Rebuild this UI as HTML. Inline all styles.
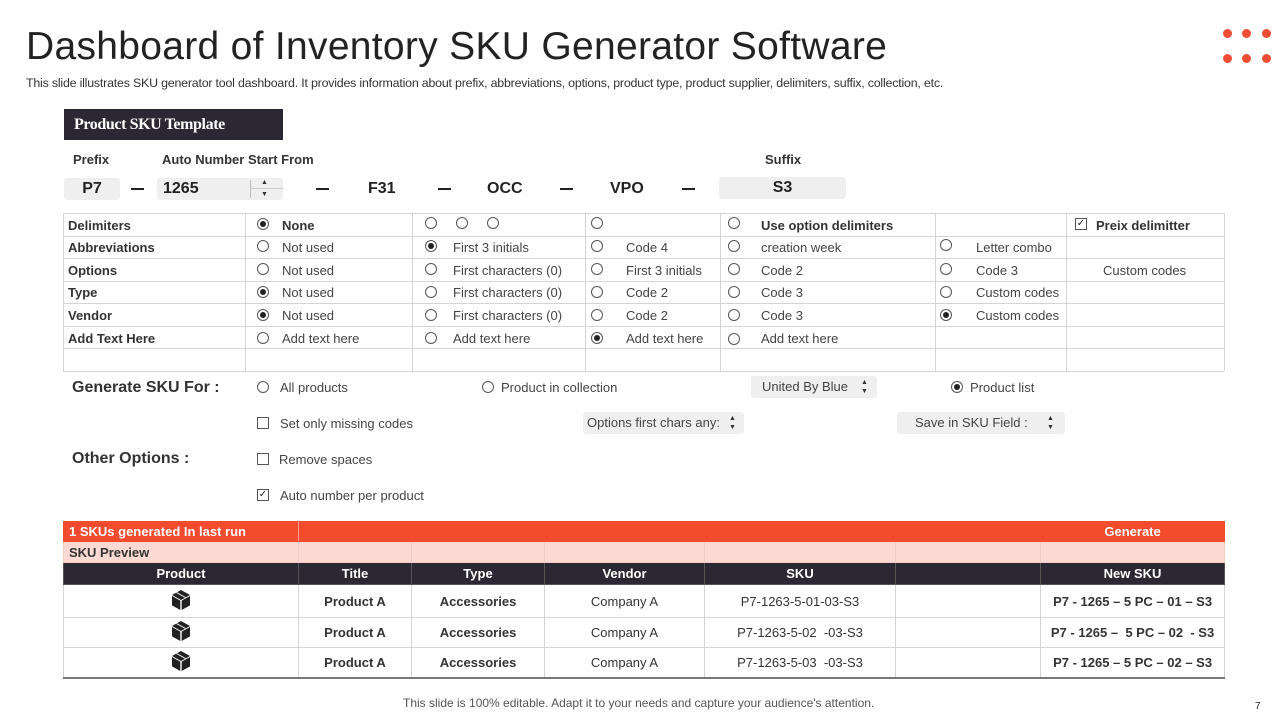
<!DOCTYPE html>
<html><head><meta charset="utf-8"><style>
*{margin:0;padding:0;box-sizing:border-box}
body{width:1280px;height:720px;background:#fff;position:relative;overflow:hidden;font-family:"Liberation Sans",Arial,sans-serif;color:#333}
.a{position:absolute;white-space:nowrap}
.t{font-size:13px;color:#444;line-height:16px}
.b{font-weight:bold;color:#333}
.r{position:absolute;width:12px;height:12px;border:1px solid #555;border-radius:50%;background:#fff}
.r.on::after{content:"";position:absolute;left:2px;top:2px;width:6px;height:6px;border-radius:50%;background:#222}
.c{position:absolute;width:12px;height:12px;border:1px solid #555;background:#fff;font-size:10px;line-height:10px;text-align:center;color:#222}
.hl{position:absolute;height:1px;background:#d4d4d4}
.vl{position:absolute;width:1px;background:#d4d4d4}
.box{position:absolute;background:#efefef;border-radius:3px;font-size:16px;font-weight:bold;color:#222;line-height:22px}
.dash{position:absolute;width:13px;height:2px;background:#222}
.dot{position:absolute;width:9px;height:9px;border-radius:50%;background:#f04e33}
.sel{position:absolute;background:#efefef;border-radius:3px;font-size:13px;color:#444;line-height:22px;height:22px}
.arr{position:absolute;font-size:7px;line-height:7px;color:#333}
table{border-collapse:collapse;position:absolute;left:63px;top:521px;width:1161px;table-layout:fixed}
td{border:1px solid #d4d4d4;font-size:13px;text-align:center;color:#333;font-weight:bold;padding:0}
</style></head><body>
<div class="a" style="left:26px;top:25px;font-size:39px;color:#222;letter-spacing:0.3px">Dashboard of Inventory SKU Generator Software</div>
<div class="a" style="left:26px;top:76px;font-size:12.4px;color:#333;letter-spacing:-0.2px">This slide illustrates SKU generator tool dashboard. It provides information about prefix, abbreviations, options, product type, product supplier, delimiters, suffix, collection, etc.</div>
<div class="dot" style="left:1223px;top:29px"></div><div class="dot" style="left:1242px;top:29px"></div><div class="dot" style="left:1262px;top:29px"></div>
<div class="dot" style="left:1223px;top:54px"></div><div class="dot" style="left:1242px;top:54px"></div><div class="dot" style="left:1262px;top:54px"></div>

<div class="a" style="left:64px;top:109px;width:219px;height:31px;background:#2b2833;color:#fff;font-family:'Liberation Serif',serif;font-weight:bold;font-size:16px;line-height:31px;padding-left:10px;letter-spacing:-0.4px">Product SKU Template</div>

<div class="a b" style="left:73px;top:152px;font-size:13px">Prefix</div>
<div class="a b" style="left:162px;top:152px;font-size:13px">Auto Number Start From</div>
<div class="a b" style="left:765px;top:152px;font-size:13px">Suffix</div>

<div class="box" style="left:64px;top:178px;width:56px;text-align:center">P7</div>
<div class="dash" style="left:131px;top:188px"></div>
<div class="box" style="left:157px;top:178px;width:126px;padding-left:6px">1265</div>
<div class="a" style="left:250px;top:180px;width:1px;height:18px;background:#bbb"></div>
<div class="a" style="left:250px;top:188px;width:33px;height:1px;background:#ccc"></div>
<div class="arr" style="left:261px;top:179px">▲</div><div class="arr" style="left:261px;top:191px">▼</div>
<div class="dash" style="left:316px;top:188px"></div>
<div class="a b" style="left:368px;top:180px;font-size:16px;color:#222">F31</div>
<div class="dash" style="left:438px;top:188px"></div>
<div class="a b" style="left:487px;top:180px;font-size:16px;color:#222">OCC</div>
<div class="dash" style="left:560px;top:188px"></div>
<div class="a b" style="left:610px;top:180px;font-size:16px;color:#222">VPO</div>
<div class="dash" style="left:682px;top:188px"></div>
<div class="box" style="left:719px;top:177px;width:127px;text-align:center">S3</div>

<div class="hl" style="left:63px;top:213px;width:1161px"></div>
<div class="hl" style="left:63px;top:236px;width:1161px"></div>
<div class="hl" style="left:63px;top:258px;width:1161px"></div>
<div class="hl" style="left:63px;top:281px;width:1161px"></div>
<div class="hl" style="left:63px;top:303px;width:1161px"></div>
<div class="hl" style="left:63px;top:326px;width:1161px"></div>
<div class="hl" style="left:63px;top:348px;width:1161px"></div>
<div class="hl" style="left:63px;top:371px;width:1161px"></div>
<div class="vl" style="left:63px;top:213px;height:158px"></div>
<div class="vl" style="left:245px;top:213px;height:158px"></div>
<div class="vl" style="left:412px;top:213px;height:158px"></div>
<div class="vl" style="left:585px;top:213px;height:158px"></div>
<div class="vl" style="left:720px;top:213px;height:158px"></div>
<div class="vl" style="left:935px;top:213px;height:158px"></div>
<div class="vl" style="left:1066px;top:213px;height:158px"></div>
<div class="vl" style="left:1224px;top:213px;height:158px"></div>

<div class="a t b" style="left:68px;top:218px">Delimiters</div>
<div class="a t b" style="left:68px;top:240px">Abbreviations</div>
<div class="a t b" style="left:68px;top:263px">Options</div>
<div class="a t b" style="left:68px;top:285px">Type</div>
<div class="a t b" style="left:68px;top:308px">Vendor</div>
<div class="a t b" style="left:68px;top:331px">Add Text Here</div>

<div class="r on" style="left:257px;top:218px"></div><div class="a t b" style="left:282px;top:218px">None</div>
<div class="r" style="left:425px;top:217px"></div><div class="r" style="left:456px;top:217px"></div><div class="r" style="left:487px;top:217px"></div>
<div class="r" style="left:591px;top:217px"></div>
<div class="r" style="left:728px;top:217px"></div><div class="a t b" style="left:761px;top:218px">Use option delimiters</div>
<div class="c" style="left:1075px;top:218px">✓</div><div class="a t b" style="left:1096px;top:218px">Preix delimitter</div>
<div class="r" style="left:257px;top:240px"></div><div class="a t" style="left:282px;top:240px">Not used</div>
<div class="r on" style="left:425px;top:240px"></div><div class="a t" style="left:453px;top:240px">First 3 initials</div>
<div class="r" style="left:591px;top:240px"></div><div class="a t" style="left:626px;top:240px">Code 4</div>
<div class="r" style="left:728px;top:240px"></div><div class="a t" style="left:761px;top:240px">creation week</div>
<div class="r" style="left:940px;top:239px"></div><div class="a t" style="left:976px;top:240px">Letter combo</div>
<div class="r" style="left:257px;top:263px"></div><div class="a t" style="left:282px;top:263px">Not used</div>
<div class="r" style="left:425px;top:263px"></div><div class="a t" style="left:453px;top:263px">First characters (0)</div>
<div class="r" style="left:591px;top:263px"></div><div class="a t" style="left:626px;top:263px">First 3 initials</div>
<div class="r" style="left:728px;top:263px"></div><div class="a t" style="left:761px;top:263px">Code 2</div>
<div class="r" style="left:940px;top:263px"></div><div class="a t" style="left:976px;top:263px">Code 3</div>
<div class="a t" style="left:1103px;top:263px">Custom codes</div>
<div class="r on" style="left:257px;top:286px"></div><div class="a t" style="left:282px;top:285px">Not used</div>
<div class="r" style="left:425px;top:286px"></div><div class="a t" style="left:453px;top:285px">First characters (0)</div>
<div class="r" style="left:591px;top:286px"></div><div class="a t" style="left:626px;top:285px">Code 2</div>
<div class="r" style="left:728px;top:286px"></div><div class="a t" style="left:761px;top:285px">Code 3</div>
<div class="r" style="left:940px;top:286px"></div><div class="a t" style="left:976px;top:285px">Custom codes</div>
<div class="r on" style="left:257px;top:309px"></div><div class="a t" style="left:282px;top:308px">Not used</div>
<div class="r" style="left:425px;top:309px"></div><div class="a t" style="left:453px;top:308px">First characters (0)</div>
<div class="r" style="left:591px;top:309px"></div><div class="a t" style="left:626px;top:308px">Code 2</div>
<div class="r" style="left:728px;top:309px"></div><div class="a t" style="left:761px;top:308px">Code 3</div>
<div class="r on" style="left:940px;top:309px"></div><div class="a t" style="left:976px;top:308px">Custom codes</div>
<div class="r" style="left:257px;top:332px"></div><div class="a t" style="left:282px;top:331px">Add text here</div>
<div class="r" style="left:425px;top:332px"></div><div class="a t" style="left:453px;top:331px">Add text here</div>
<div class="r on" style="left:591px;top:332px"></div><div class="a t" style="left:626px;top:331px">Add text here</div>
<div class="r" style="left:728px;top:333px"></div><div class="a t" style="left:761px;top:331px">Add text here</div>

<div class="a b" style="left:72px;top:379px;font-size:16px">Generate SKU For :</div>
<div class="a b" style="left:72px;top:450px;font-size:16px">Other Options :</div>
<div class="r" style="left:257px;top:381px"></div><div class="a t" style="left:280px;top:380px">All products</div>
<div class="r" style="left:482px;top:381px"></div><div class="a t" style="left:501px;top:380px">Product in collection</div>
<div class="sel" style="left:751px;top:376px;width:126px;padding-left:11px">United By Blue</div>
<div class="arr" style="left:861px;top:379px">▲</div><div class="arr" style="left:861px;top:388px">▼</div>
<div class="r on" style="left:951px;top:381px"></div><div class="a t" style="left:970px;top:380px">Product list</div>
<div class="c" style="left:257px;top:417px"></div><div class="a t" style="left:280px;top:416px">Set only missing codes</div>
<div class="sel" style="left:583px;top:412px;width:161px;padding-left:4px">Options first chars any:</div>
<div class="arr" style="left:729px;top:415px">▲</div><div class="arr" style="left:729px;top:424px">▼</div>
<div class="sel" style="left:897px;top:412px;width:168px;padding-left:18px">Save in SKU Field :</div>
<div class="arr" style="left:1047px;top:415px">▲</div><div class="arr" style="left:1047px;top:424px">▼</div>
<div class="c" style="left:257px;top:453px"></div><div class="a t" style="left:279px;top:452px">Remove spaces</div>
<div class="c" style="left:257px;top:489px">✓</div><div class="a t" style="left:280px;top:488px">Auto number per product</div>

<table>
<colgroup><col style="width:235px"><col style="width:113px"><col style="width:133px"><col style="width:160px"><col style="width:191px"><col style="width:145px"><col style="width:184px"></colgroup>
<tr style="height:20px;background:#f34b2e"><td style="text-align:left;color:#fff;padding-left:5px;border-color:#f34b2e;border-right:1px solid #f8a090">1 SKUs generated In last run</td><td colspan="5" style="border-color:#f34b2e"></td><td style="color:#fff;border-color:#f34b2e;border-left:1px solid #f8a090">Generate</td></tr>
<tr style="height:21px;background:#fcd9d2"><td style="text-align:left;padding-left:5px;border-color:#f5ccc4">SKU Preview</td><td style="border-color:#f5ccc4"></td><td style="border-color:#f5ccc4"></td><td style="border-color:#f5ccc4"></td><td style="border-color:#f5ccc4"></td><td style="border-color:#f5ccc4"></td><td style="border-color:#f5ccc4"></td></tr>
<tr style="height:22px;background:#2b2833"><td style="color:#fff;border-color:#555">Product</td><td style="color:#fff;border-color:#555">Title</td><td style="color:#fff;border-color:#555">Type</td><td style="color:#fff;border-color:#555">Vendor</td><td style="color:#fff;border-color:#555">SKU</td><td style="border-color:#555"></td><td style="color:#fff;border-color:#555">New SKU</td></tr>
<tr style="height:33px"><td><svg width="22" height="22" viewBox="0 0 22 22"><path d="M11 1 L20 6 L11 11 L2 6Z" fill="#222"/><path d="M2 7 L10.3 11.6 L10.3 21 L2 16.4Z" fill="#222"/><path d="M20 7 L11.7 11.6 L11.7 21 L20 16.4Z" fill="#222"/><path d="M6.5 3.5 L15.5 8.5" stroke="#fff" stroke-width="1"/></svg></td><td>Product A</td><td>Accessories</td><td style="font-weight:normal">Company A</td><td style="font-weight:normal">P7-1263-5-01-03-S3</td><td></td><td>P7 - 1265 – 5 PC – 01 – S3</td></tr>
<tr style="height:30px"><td><svg width="22" height="22" viewBox="0 0 22 22"><path d="M11 1 L20 6 L11 11 L2 6Z" fill="#222"/><path d="M2 7 L10.3 11.6 L10.3 21 L2 16.4Z" fill="#222"/><path d="M20 7 L11.7 11.6 L11.7 21 L20 16.4Z" fill="#222"/><path d="M6.5 3.5 L15.5 8.5" stroke="#fff" stroke-width="1"/></svg></td><td>Product A</td><td>Accessories</td><td style="font-weight:normal">Company A</td><td style="font-weight:normal">P7-1263-5-02 &nbsp;-03-S3</td><td></td><td>P7 - 1265 – &nbsp;5 PC – 02 &nbsp;- S3</td></tr>
<tr style="height:30px;border-bottom:2px solid #777"><td><svg width="22" height="22" viewBox="0 0 22 22"><path d="M11 1 L20 6 L11 11 L2 6Z" fill="#222"/><path d="M2 7 L10.3 11.6 L10.3 21 L2 16.4Z" fill="#222"/><path d="M20 7 L11.7 11.6 L11.7 21 L20 16.4Z" fill="#222"/><path d="M6.5 3.5 L15.5 8.5" stroke="#fff" stroke-width="1"/></svg></td><td>Product A</td><td>Accessories</td><td style="font-weight:normal">Company A</td><td style="font-weight:normal">P7-1263-5-03 &nbsp;-03-S3</td><td></td><td>P7 - 1265 – 5 PC – 02 – S3</td></tr>
</table>

<div class="a" style="left:403px;top:696px;font-size:12px;color:#555">This slide is 100% editable. Adapt it to your needs and capture your audience's attention.</div>
<div class="a" style="left:1255px;top:701px;font-size:10px;color:#222">7</div>
</body></html>
